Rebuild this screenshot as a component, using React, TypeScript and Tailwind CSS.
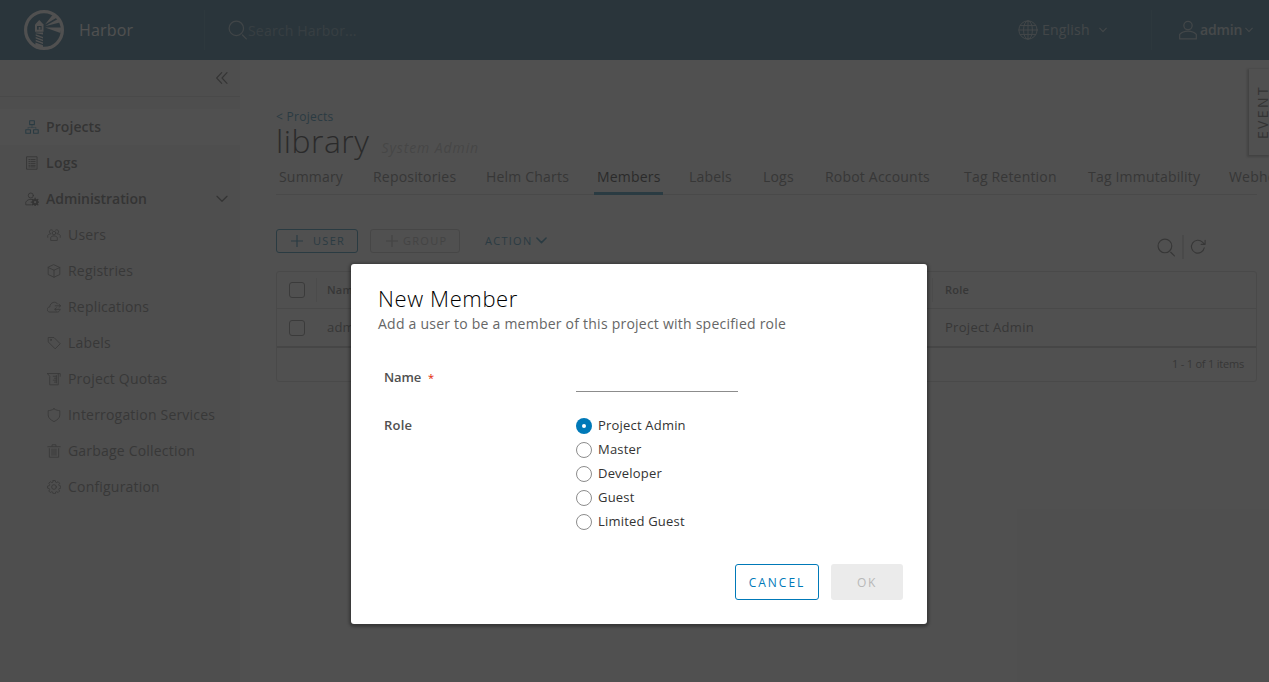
import React from "react";

type IconProps = { className?: string };

function Svg({ className, children, w = 2.2 }: IconProps & { children: React.ReactNode; w?: number }) {
  return (
    <svg viewBox="0 0 36 36" fill="none" stroke="currentColor" strokeWidth={w} strokeLinejoin="round" strokeLinecap="round" className={`shrink-0 ${className ?? ""}`}>
      {children}
    </svg>
  );
}

const GEAR = "M15.3 3h5.4l1 4.2 2.6 1.1 3.8-2.3 3.8 3.8-2.2 3.8 1 2.6 4.3 1v5.4l-4.3 1-1 2.6 2.2 3.8-3.8 3.8-3.8-2.2-2.6 1.1-1 4.3h-5.4l-1-4.3-2.6-1.1-3.8 2.2-3.8-3.8 2.3-3.8-1.1-2.6-4.3-1v-5.4l4.3-1 1.1-2.6-2.3-3.8 3.8-3.8 3.8 2.3 2.6-1.1z";

const icons = {
  projects: (
    <>
      <path d="M12 2h12v10H12zM2 25h12v9H2zM22 25h12v9H22z" />
      <path d="M18 13v6M8 22v-3h20v3" strokeWidth="1.6" strokeDasharray="3 2" />
    </>
  ),
  logs: (
    <>
      <path d="M5 2h26v32H5z" />
      <path d="M10 9h2m3 0h11M10 14h2m3 0h11M10 19h2m3 0h11M10 24h2m3 0h11M10 28h2m3 0h11" />
    </>
  ),
  administration: (
    <>
      <circle cx="15" cy="9" r="6.5" />
      <path d="M16 33H2v-7c3-5 8-8 15-7" />
      <circle cx="26" cy="26" r="5.5" strokeWidth="5" />
      <path d="M26 16v4M26 32v4M16 26h4M32 26h4M19 19l3 3M30 30l3 3M33 19l-3 3M22 30l-3 3" strokeWidth="3.5" />
    </>
  ),
  users: (
    <>
      <circle cx="18" cy="13" r="4.5" />
      <path d="M9.5 31v-7c4-5 13-5 17 0v7zM14 5.500a5 5 0 1 0-6 8M22 5.500a5 5 0 1 1 6 8M2 24v-5c2-3 4-4 8-4M34 24v-5c-2-3-4-4-8-4" />
    </>
  ),
  registries: <path d="M18 2l15 7v18l-15 7-15-7V9zM3 9l15 7 15-7M18 16v18" />,
  replications: (
    <>
      <path d="M33 26c-1 3-3 5-6 5H7c-9-1-8-13 0-13C8 5 23 2 27 10" />
      <path d="M21 15h14m-4-4l4 4-4 4M34 24H20m4-4l-4 4 4 4" />
    </>
  ),
  labels: (
    <>
      <path d="M4 4h14l16 16-13 13L4 16z" />
      <circle cx="10" cy="10" r="1.5" />
    </>
  ),
  quotas: (
    <>
      <path d="M1 4h33v7M1 4l6 7v22h22V4" />
      <path d="M16 11h8m-5 5h5m-8 5h8m-5 5h5M24 9v19" />
    </>
  ),
  shield: <path d="M18 2c5 4 10 4 15 5v11c0 8-7 13-15 17C10 31 3 26 3 18V7c5-1 10-1 15-5z" />,
  trash: <path d="M2 7h32M13 6V2h10v4M6 12v22h24V12M13 13v16M18 13v16M23 13v16" />,
  gear: (
    <>
      <path d={GEAR} transform="translate(0.5 -1.6)" />
      <circle cx="18" cy="18" r="6" />
    </>
  ),
};

type IconName = keyof typeof icons;

const subItems: { label: string; icon: IconName }[] = [
  { label: "Users", icon: "users" },
  { label: "Registries", icon: "registries" },
  { label: "Replications", icon: "replications" },
  { label: "Labels", icon: "labels" },
  { label: "Project Quotas", icon: "quotas" },
  { label: "Interrogation Services", icon: "shield" },
  { label: "Garbage Collection", icon: "trash" },
  { label: "Configuration", icon: "gear" },
];

const tabs = ["Summary", "Repositories", "Helm Charts", "Members", "Labels", "Logs", "Robot Accounts", "Tag Retention", "Tag Immutability", "Webhooks"];

const roles = ["Project Admin", "Master", "Developer", "Guest", "Limited Guest"];

function Search({ className }: IconProps) {
  return (
    <Svg className={className} w={2.2}>
      <circle cx="15" cy="15" r="13" />
      <path d="M26 27l7 7" />
    </Svg>
  );
}

function Chevron({ className, w = 4 }: IconProps & { w?: number }) {
  return (
    <Svg className={className} w={w}>
      <path d="M3 10l15 15 15-15" />
    </Svg>
  );
}

function Logo() {
  return (
    <svg viewBox="0 0 40 40" className="h-10 w-10 shrink-0 text-[#fafafa]" fill="currentColor">
      <circle cx="20" cy="20" r="18.4" fill="none" stroke="currentColor" strokeWidth="3.2" />
      <path d="M15.3 10l4.200 4.500v7.200H11V14.500z" />
      <path d="M13 16h4.600v3.700H13z" fill="#004a70" />
      <path d="M14.700 17h1.800v2.700h-1.800z" />
      <path d="M11.700 22.500h7.300v2l-7.300-1.200zM11.700 24.300l7.300 2.700v1.500l-7.300-2.700zM11.700 27l7.300 2.700v1.500l-7.300-2.700zM11.700 29.700l7.300 2.700v1.500l-7.300-2.700zM11.500 32.500l7.500 2.700v3.800l-8-1z" />
      <path d="M21 14.500L28.500 5l4.500 2.500zM21 16.300L33.800 9l2 3.600zM21 17.500h16.500l-1 5.500z" />
    </svg>
  );
}

function Header() {
  return (
    <header className="flex h-[60px] shrink-0 items-center bg-[#004a70] text-[#fafafa]">
      <div className="flex w-[204px] items-center pl-6">
        <Logo />
        <span className="ml-[15px] pb-px text-[16px] leading-6">Harbor</span>
      </div>
      <div className="flex h-10 flex-1 items-center border-l border-white/10 pl-[23px]">
        <Search className="h-5 w-5 opacity-60" />
        <span className="pt-0.5 opacity-35">Search Harbor...</span>
      </div>
      <div className="flex h-10 w-[134px] items-center opacity-65">
        <Svg className="ml-px h-5 w-5" w={1.8}>
          <circle cx="18" cy="18" r="16.5" />
          <ellipse cx="18" cy="18" rx="8" ry="16.5" />
          <path d="M18 2v32M2 18h32M4 10h28M4 26h28" />
        </Svg>
        <span className="ml-1 w-12 font-medium">English</span>
        <Chevron className="ml-[9px] h-2 w-2" w={5} />
      </div>
      <div className="flex h-10 w-[118px] items-center border-l border-white/10 pl-[26px]">
        <Svg className="h-5 w-5 opacity-65">
          <circle cx="18" cy="10" r="7.5" />
          <path d="M3 34v-8c7-8 23-8 30 0v8z" />
        </Svg>
        <span className="ml-0.5 w-[43px] font-semibold tracking-[-0.01em] opacity-75">admin</span>
        <Chevron className="ml-0.5 h-2 w-2 opacity-65" w={5} />
      </div>
    </header>
  );
}

function Sidebar() {
  return (
    <nav className="w-60 shrink-0 bg-[#eee] text-[#454545]">
      <div className="flex h-[37px] items-center justify-end border-b border-[#ccc] pr-3">
        <Svg className="h-3 w-3" w={3.5}>
          <path d="M17 2L2 18l15 16M33 2L18 18l15 16" />
        </Svg>
      </div>
      <div className="mt-3 flex h-9 items-center bg-[#fff] pl-[25px] font-semibold tracking-[0.005em]">
        <Svg className="h-3.5 w-3.5 text-[#0072a3]" w={2.8}>{icons.projects}</Svg>
        <span className="ml-[7px]">Projects</span>
      </div>
      <div className="flex h-9 items-center pl-[25px] font-semibold tracking-[0.02em]">
        <Svg className="h-3.5 w-3.5">{icons.logs}</Svg>
        <span className="ml-[7px]">Logs</span>
      </div>
      <div className="flex h-9 items-center pl-[25px] pr-3 font-semibold tracking-[-0.003em]">
        <Svg className="h-3.5 w-3.5">{icons.administration}</Svg>
        <span className="ml-[7px] flex-1">Administration</span>
        <Chevron className="h-3 w-3" w={4} />
      </div>
      {subItems.map((s) => (
        <div key={s.label} className="flex h-9 items-center pl-[47px] text-[#606060]">
          <Svg className="h-3.5 w-3.5">{icons[s.icon]}</Svg>
          <span className="ml-[7px]">{s.label}</span>
        </div>
      ))}
    </nav>
  );
}

function Checkbox() {
  return <span className="block h-4 w-4 shrink-0 rounded-[3px] border border-[#737373]" />;
}

function Plus() {
  return (
    <svg viewBox="0 0 12 12" className="h-3 w-3" stroke="currentColor" strokeWidth="1.2">
      <path d="M6 0v12M0 6h12" />
    </svg>
  );
}

function Members() {
  return (
    <main className="flex min-w-0 flex-1 flex-col bg-[#fafafa] pl-9 text-[#565656]">
      <a className="mt-12 h-[17px] text-[12px] leading-[17px] tracking-[0.022em] text-[#0072a3]">&lt; Projects</a>
      <div className="flex h-9 items-baseline whitespace-nowrap">
        <h1 className="text-[32px] leading-[32px] font-light tracking-[0.015em] text-black">library</h1>
        <span className="ml-[12px] italic tracking-[0.065em] text-[#565656]/40">System Admin</span>
      </div>
      <div className="mr-3 grid h-[34px] grid-cols-[94px_113px_111px_92px_74px_62px_139px_124px_141px_80px] whitespace-nowrap border-b border-[#ccc]">
        {tabs.map((t) => (
          <span key={t} className={t === "Members" ? "h-[34px] w-[69px] border-b-3 border-[#0072a3] pl-[3px] leading-[31px] text-black" : "h-[34px] pl-[3px] leading-[31px]"}>
            {t}
          </span>
        ))}
      </div>
      <div className="mr-3 mt-[34px] flex h-6 items-center text-[11px] tracking-[0.115em]">
        <button className="flex h-6 w-[82px] items-center rounded-[3px] border border-[#0072a3] pl-3.5 text-[#0072a3]">
          <Plus />
          <span className="ml-[10px] tracking-[0.12em]">USER</span>
        </button>
        <button className="ml-3 flex h-6 w-[90px] items-center rounded-[3px] border border-[#bbb] pl-[15px] text-[#aaa]">
          <Plus />
          <span className="ml-[5px] tracking-[0.115em]">GROUP</span>
        </button>
        <span className="ml-[25px] w-[51px] font-medium text-[#0072a3]">ACTION</span>
        <Chevron className="mb-0.5 h-[11px] w-[11px] text-[#0072a3]" w={5} />
        <div className="ml-auto mr-[50px] mt-3 flex items-center">
          <Search className="h-[19px] w-[19px]" />
          <span className="ml-[6px] h-6 w-0.5 bg-[#ccc]" />
          <Svg className="mr-px ml-[6px] h-4 w-4" w={2.5}>
            <path d="M32 20a14.5 14.5 0 1 1-4-13l5 5M34 3v9h-9" />
          </Svg>
        </div>
      </div>
      <div className="mr-3 mt-[18px] h-[111px] rounded-[3px] border border-[#ccc]">
        <div className="flex h-[37px] items-center border-b border-[#ccc] pl-3 text-[11px] font-semibold">
          <Checkbox />
          <span className="ml-[11px] h-6 w-px bg-[#ddd]" />
          <span className="ml-[10px] w-[605px]">Name</span>
          <span className="h-6 w-px bg-[#ddd]" />
          <span className="ml-3">Role</span>
        </div>
        <div className="flex h-[39px] items-center border-b-2 border-[#bbb] pl-3 text-[13px]">
          <Checkbox />
          <span className="ml-[22px] w-[618px] pb-0.5">admin</span>
          <span className="pb-0.5 tracking-[0.022em]">Project Admin</span>
        </div>
        <div className="flex h-[33px] items-center justify-end pr-3 pb-0.5 text-[11px] tracking-[-0.019em]">1 - 1 of 1 items</div>
      </div>
    </main>
  );
}

function NewMemberDialog() {
  return (
    <div role="dialog" className="flex h-[360px] w-[576px] flex-col rounded-[3px] bg-white pl-[27px] pr-6 shadow-[0_1px_3px_2px_rgba(0,0,0,0.3)]">
      <h2 className="mt-5 h-[30px] text-[22px] leading-[29px] font-light tracking-[0.028em] text-black">New Member</h2>
      <p className="h-5 leading-5 tracking-[0.0165em] text-[#666]">Add a user to be a member of this project with specified role</p>
      <div className="ml-1.5 mt-7 flex h-[30px]">
        <label className="w-48 text-[13px] leading-[31px] font-semibold tracking-[-0.01em] text-[#505050]">
          Name<span className="ml-[7px] text-[11px] font-normal text-[#e12200]">*</span>
        </label>
        <input className="h-[30px] w-[162px] border-b border-[#8c8c8c] outline-none" />
      </div>
      <div className="ml-1.5 mt-[22px] flex text-[13px]">
        <span className="w-48 leading-[22px] font-semibold text-[#505050]">Role</span>
        <div className="flex flex-col">
          {roles.map((r, i) => (
            <label key={r} className="flex h-6 items-center text-[#333]">
              <span className={i === 0 ? "flex h-4 w-4 items-center justify-center rounded-full bg-[#0079b8]" : "h-4 w-4 rounded-full border border-[#8c8c8c]"}>
                {i === 0 && <span className="h-1 w-1 rounded-full bg-white" />}
              </span>
              <span className="ml-1.5 pb-0.5">{r}</span>
            </label>
          ))}
        </div>
      </div>
      <div className="mt-[30px] flex justify-end gap-3 text-[12px]">
        <button className="h-9 w-[84px] rounded-[3px] border border-[#0079b8] pt-0.5 tracking-[0.165em] text-[#0079b8]">CANCEL</button>
        <button className="h-9 w-[72px] rounded-[3px] bg-[#ebebeb] pt-0.5 tracking-[0.14em] text-[#b8b8b8]">OK</button>
      </div>
    </div>
  );
}

export default function App() {
  return (
    <div className="relative flex h-[682px] w-[1269px] flex-col overflow-hidden font-['Open_Sans',sans-serif] text-[14px] leading-5 tracking-[0.014em]">
      <Header />
      <div className="flex min-h-0 flex-1 overflow-hidden">
        <Sidebar />
        <Members />
      </div>
      <div className="absolute top-[69px] right-0 flex h-[86px] w-5 items-center overflow-hidden bg-[#fafafa] pl-[6px] text-[#454545] shadow-[-1px_1px_2px_1px_rgba(0,0,0,0.35)]">
        <span className="rotate-180 leading-4 tracking-[0.17em] [writing-mode:vertical-rl]">EVENT</span>
      </div>
      <div className="absolute inset-0 flex items-start justify-center bg-[#313131]/85 pt-[264px] pl-[9px]">
        <NewMemberDialog />
      </div>
    </div>
  );
}
